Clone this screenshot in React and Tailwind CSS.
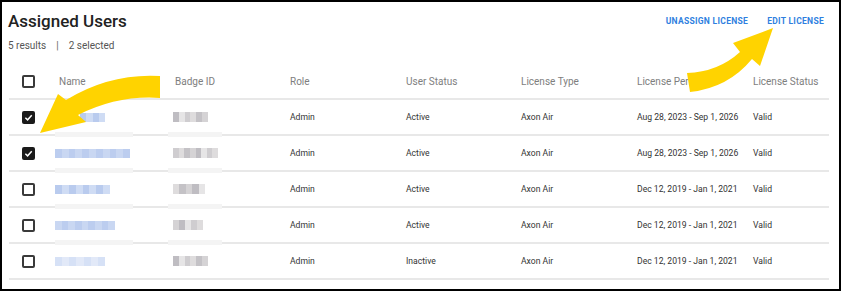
import React from "react";

const rows = [
  { checked: true, name: [80, 25], badge: 35, role: "Admin", status: "Active", type: "Axon Air", period: "Aug 28, 2023 - Sep 1, 2026", lic: "Valid" },
  { checked: true, name: [55, 75], badge: 45, role: "Admin", status: "Active", type: "Axon Air", period: "Aug 28, 2023 - Sep 1, 2026", lic: "Valid" },
  { checked: false, name: [55, 55], badge: 32, role: "Admin", status: "Active", type: "Axon Air", period: "Dec 12, 2019 - Jan 1, 2021", lic: "Valid" },
  { checked: false, name: [55, 60], badge: 30, role: "Admin", status: "Active", type: "Axon Air", period: "Dec 12, 2019 - Jan 1, 2021", lic: "Valid" },
  { checked: false, name: [55, 50], badge: 35, role: "Admin", status: "Inactive", type: "Axon Air", period: "Dec 12, 2019 - Jan 1, 2021", lic: "Valid" },
];

function Box({ checked }) {
  if (checked)
    return (
      <div className="w-[13px] h-[13px] rounded-[2px] bg-[#1a1a1a] flex items-center justify-center">
        <svg width="9" height="9" viewBox="0 0 10 10">
          <path d="M1.5 5.2 L4 7.6 L8.6 2.4" fill="none" stroke="white" strokeWidth="1.6" />
        </svg>
      </div>
    );
  return <div className="w-[13px] h-[13px] rounded-[2px] border-2 border-[#3a3a3a] bg-white" />;
}

function BlurName({ offset, width }) {
  const cols = ["#c9d7f2", "#b9cbee", "#d6e1f6", "#bccdef", "#cfdcf4", "#e2e9f8"];
  const n = Math.max(3, Math.round(width / 7));
  return (
    <div className="flex h-[9px] blur-[0.6px]" style={{ marginLeft: offset - 59, width }}>
      {Array.from({ length: n }).map((_, i) => (
        <div key={i} className="flex-1 h-full" style={{ background: cols[(i * 3 + width) % cols.length] }} />
      ))}
    </div>
  );
}

function BlurBadge({ width }) {
  const cols = ["#d5d3d5", "#c4c2c6", "#dedcdd", "#cfcdd0", "#e6e5e6", "#bfbdc2"];
  const n = Math.max(3, Math.round(width / 6));
  return (
    <div className="flex h-[10px] ml-[-2px] blur-[0.6px]" style={{ width }}>
      {Array.from({ length: n }).map((_, i) => (
        <div key={i} className="flex-1 h-full" style={{ background: cols[(i * 5 + width) % cols.length] }} />
      ))}
    </div>
  );
}

const grid = "grid grid-cols-[50px_116px_115px_116px_115px_116px_116px_1fr] items-center";

export default function App() {
  return (
    <div className="relative w-[841px] h-[291px] border-2 border-black bg-white overflow-hidden" style={{ fontFamily: "Roboto, 'Liberation Sans', sans-serif" }}>
      <div className="flex items-start justify-between pl-[6px] pr-[15px]">
        <div>
          <div className="text-[17px] leading-[22px] font-medium text-[#222] mt-[8px]">Assigned Users</div>
          <div className="flex items-center text-[10px] text-[#555] mt-[7px] leading-[14px]">
            <span>5 results</span>
            <span className="mx-[10px] text-[#666]">|</span>
            <span>2 selected</span>
          </div>
        </div>
        <div className="flex gap-[19px] mt-[13px] text-[8.5px] font-bold tracking-[0.3px] text-[#2f7fe0]">
          <span>UNASSIGN LICENSE</span>
          <span>EDIT LICENSE</span>
        </div>
      </div>
      <div className="ml-[7px] mr-[10px] mt-[11px]">
        <div className={`${grid} h-[36px] border-b-2 border-[#e8e8e8] text-[10px] text-[#7e7e7e]`}>
          <div className="pl-[13px]"><Box checked={false} /></div>
          <div>Name</div>
          <div>Badge ID</div>
          <div>Role</div>
          <div>User Status</div>
          <div>License Type</div>
          <div>License Period</div>
          <div>License Status</div>
        </div>
        {rows.map((r, i) => (
          <div key={i} className={`${grid} relative h-[36px] border-b-2 border-[#e8e8e8] text-[8.6px] text-[#333]`}>
            <div className="pl-[13px]"><Box checked={r.checked} /></div>
            <div className="relative h-full flex items-center">
              <BlurName offset={r.name[0]} width={r.name[1]} />
              {i < 4 && <div className="absolute left-[-4px] bottom-[-3px] w-[78px] h-[5px] bg-[#f4f4f4]" />}
            </div>
            <div className="relative h-full flex items-center">
              <BlurBadge width={r.badge} />
              {i < 4 && <div className="absolute left-[-7px] bottom-[-3px] w-[54px] h-[5px] bg-[#f4f4f4]" />}
            </div>
            <div>{r.role}</div>
            <div>{r.status}</div>
            <div>{r.type}</div>
            <div>{r.period}</div>
            <div>{r.lic}</div>
          </div>
        ))}
      </div>
      <svg className="absolute left-[-2px] top-[-2px] pointer-events-none" width="841" height="291" viewBox="0 0 841 291">
        <path d="M160 76 Q110 73 66 100 L58 94 L40 133 L86 122 L78 115 Q118 95 160 98 Z" fill="#FFD300" />
        <path d="M687 73 Q718 72 740 52 L733 43 L773 28 L760 66 L752 59 Q728 88 690 92 Z" fill="#FFD300" />
      </svg>
    </div>
  );
}
